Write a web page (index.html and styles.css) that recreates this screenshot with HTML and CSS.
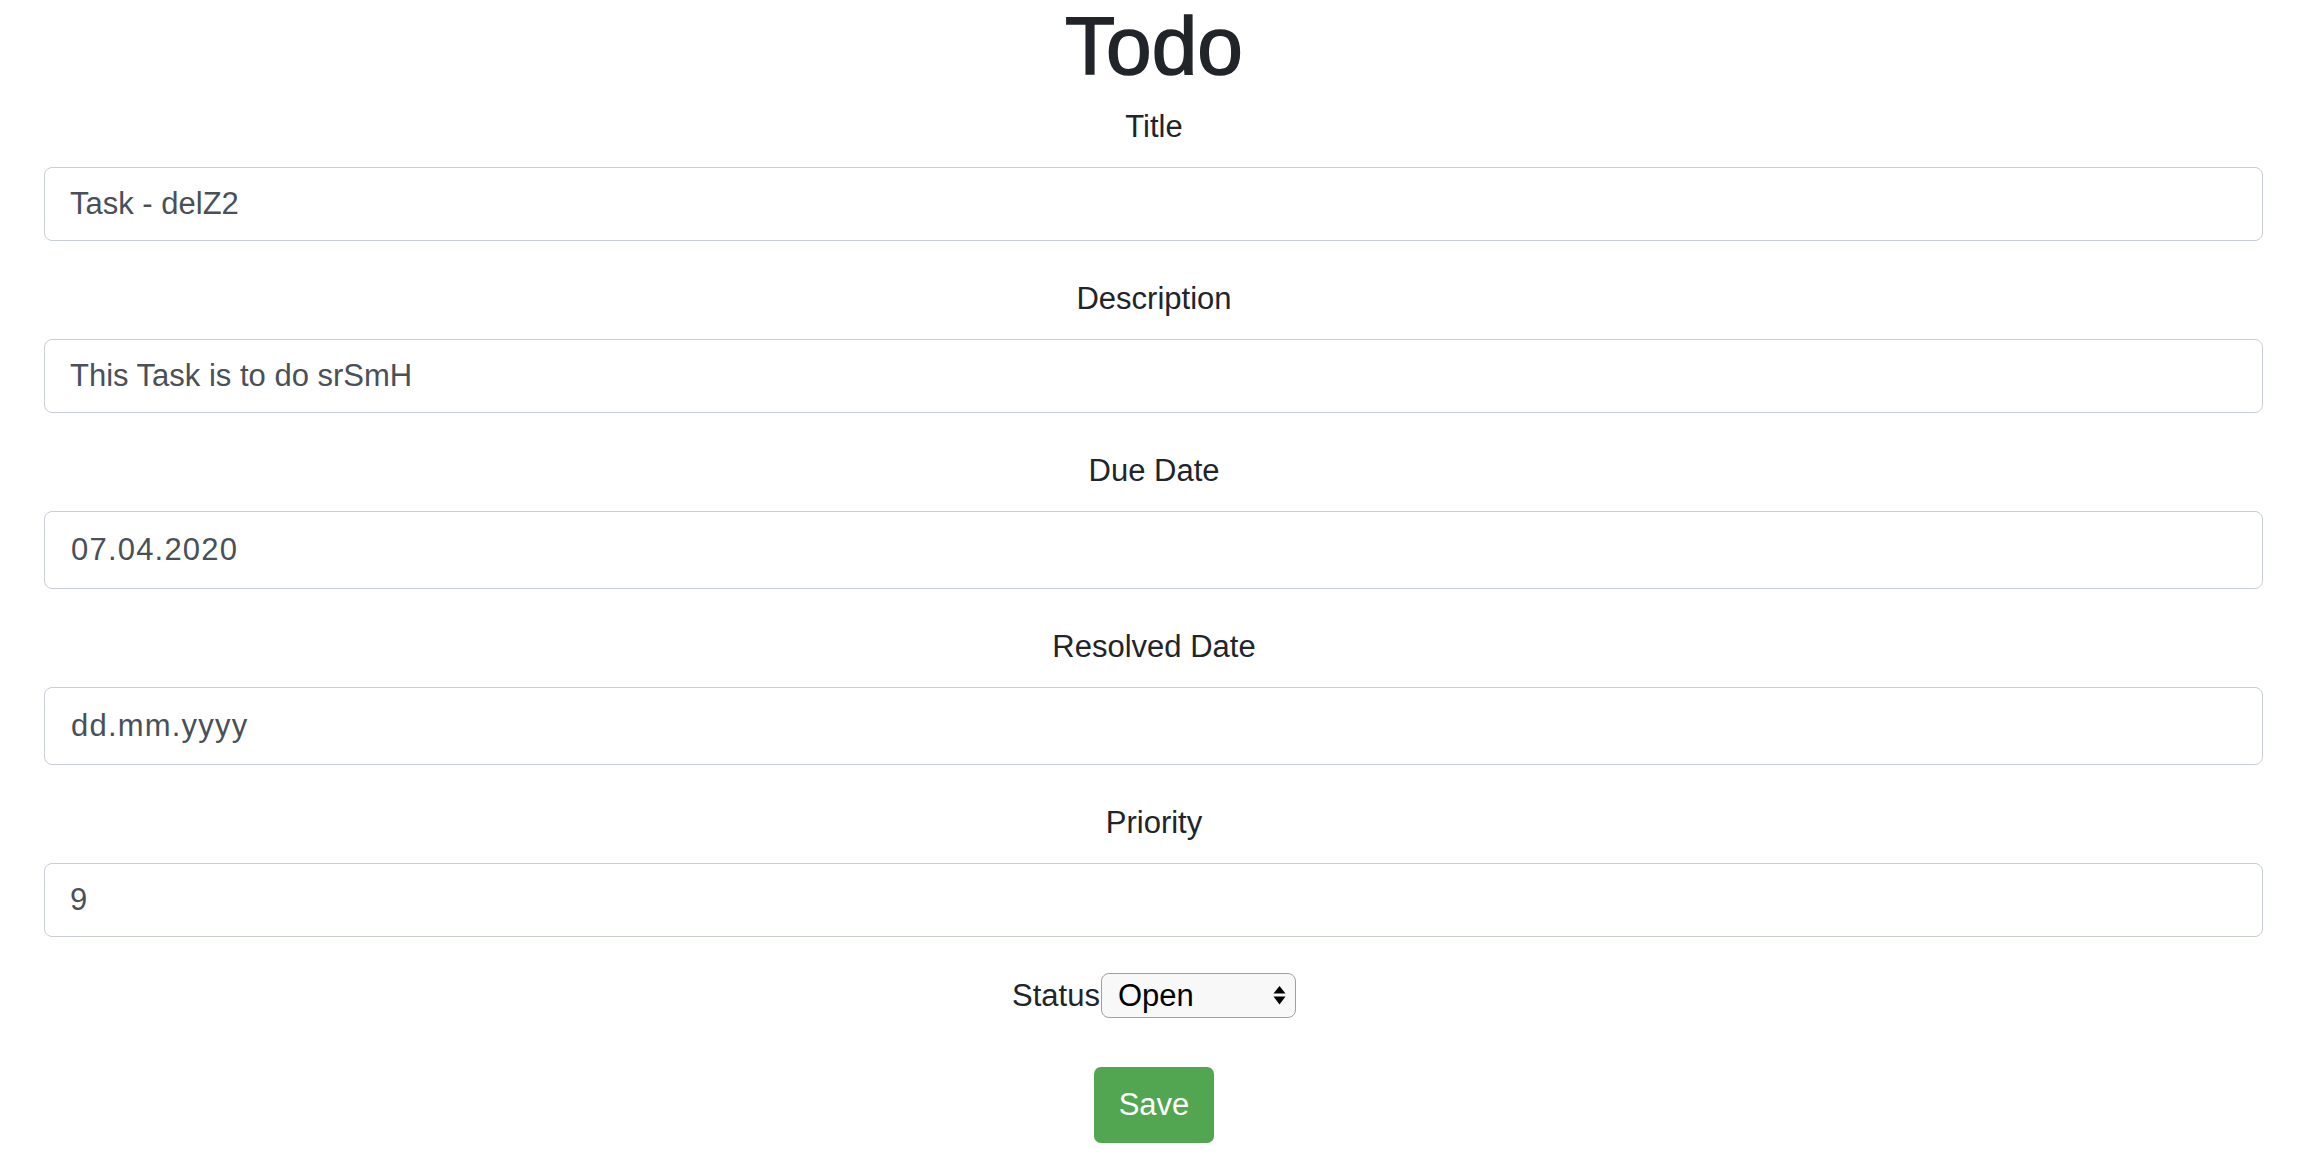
FILE: index.html
```html
<!DOCTYPE html>
<html lang="en">
<head>
<meta charset="utf-8">
<title>Todo</title>
<link rel="stylesheet" href="styles.css">
</head>
<body>
<div class="page">
  <h1 class="heading">Todo</h1>
  <form class="todo-form">
    <div class="group">
      <label class="label" for="title">Title</label>
      <input class="control" id="title" type="text" value="Task - delZ2">
    </div>
    <div class="group">
      <label class="label" for="desc">Description</label>
      <input class="control" id="desc" type="text" value="This Task is to do srSmH">
    </div>
    <div class="group">
      <label class="label" for="due">Due Date</label>
      <input class="control control-date" id="due" type="text" value="07.04.2020">
    </div>
    <div class="group">
      <label class="label" for="resolved">Resolved Date</label>
      <input class="control control-date" id="resolved" type="text" value="dd.mm.yyyy">
    </div>
    <div class="group">
      <label class="label" for="prio">Priority</label>
      <input class="control" id="prio" type="text" value="9">
    </div>
    <div class="status-row">
      <label class="status-label" for="status">Status</label>
      <span class="select-wrap">
        <select class="select" id="status">
          <option>Open</option>
          <option>Done</option>
        </select>
        <svg class="select-arrows" width="13" height="19" viewBox="0 0 13 19">
          <path d="M6.5 0 L12.5 7.5 L0.5 7.5 Z" fill="#000"/>
          <path d="M0.5 10.5 L12.5 10.5 L6.5 18.5 Z" fill="#000"/>
        </svg>
      </span>
    </div>
    <div class="actions">
      <button class="btn-save" type="button">Save</button>
    </div>
  </form>
</div>
</body>
</html>
```
FILE: styles.css
```css
html, body {
  margin: 0;
  padding: 0;
  background: #fff;
}
body {
  font-family: "Liberation Sans", Arial, sans-serif;
  color: #212529;
}
.page {
  width: 2308px;
}
.heading {
  margin: 0 0 12px 0;
  font-family: "Liberation Sans", Arial, sans-serif;
  font-size: 82px;
  line-height: 92px;
  font-weight: 400;
  letter-spacing: 0;
  text-align: center;
  color: #212529;
  -webkit-text-stroke: 1.5px #212529;
}
.todo-form {
  display: flex;
  flex-direction: column;
}
.group {
  display: flex;
  flex-direction: column;
  align-items: center;
  margin-bottom: 35px;
}
.label {
  font-size: 31px;
  line-height: 46.5px;
  margin-bottom: 16.5px;
  color: #212529;
}
.control {
  align-self: stretch;
  margin: 0 45px 0 44px;
  box-sizing: border-box;
  height: 74px;
  padding: 0 25px;
  border: 1px solid #c8ced4;
  border-radius: 8px;
  font-family: "Liberation Sans", Arial, sans-serif;
  font-size: 31px;
  color: #495057;
  background: #fff;
  outline: none;
}
.control-date {
  height: 78px;
  padding-left: 26px;
  letter-spacing: 1.2px;
}
.status-row {
  display: flex;
  justify-content: center;
  align-items: center;
  height: 45px;
  margin-top: 0.7px;
}
.status-label {
  font-size: 31px;
  line-height: 45px;
  color: #212529;
}
.select-wrap {
  position: relative;
  display: inline-block;
  margin-left: 1px;
}
.select {
  -webkit-appearance: none;
  appearance: none;
  display: block;
  box-sizing: border-box;
  width: 195px;
  height: 45px;
  padding: 0 40px 0 16px;
  border: 1px solid #a0a0a0;
  border-radius: 8px;
  background: #f8f8f8;
  font-family: "Liberation Sans", Arial, sans-serif;
  font-size: 31px;
  color: #000;
  outline: none;
}
.select-arrows {
  position: absolute;
  right: 10px;
  top: 13px;
  pointer-events: none;
}
.actions {
  display: flex;
  justify-content: center;
  margin-top: 49px;
}
.btn-save {
  width: 120px;
  height: 76px;
  border: none;
  border-radius: 7px;
  background: #52a652;
  color: #fff;
  font-family: "Liberation Sans", Arial, sans-serif;
  font-size: 31px;
  padding: 0;
}
```
